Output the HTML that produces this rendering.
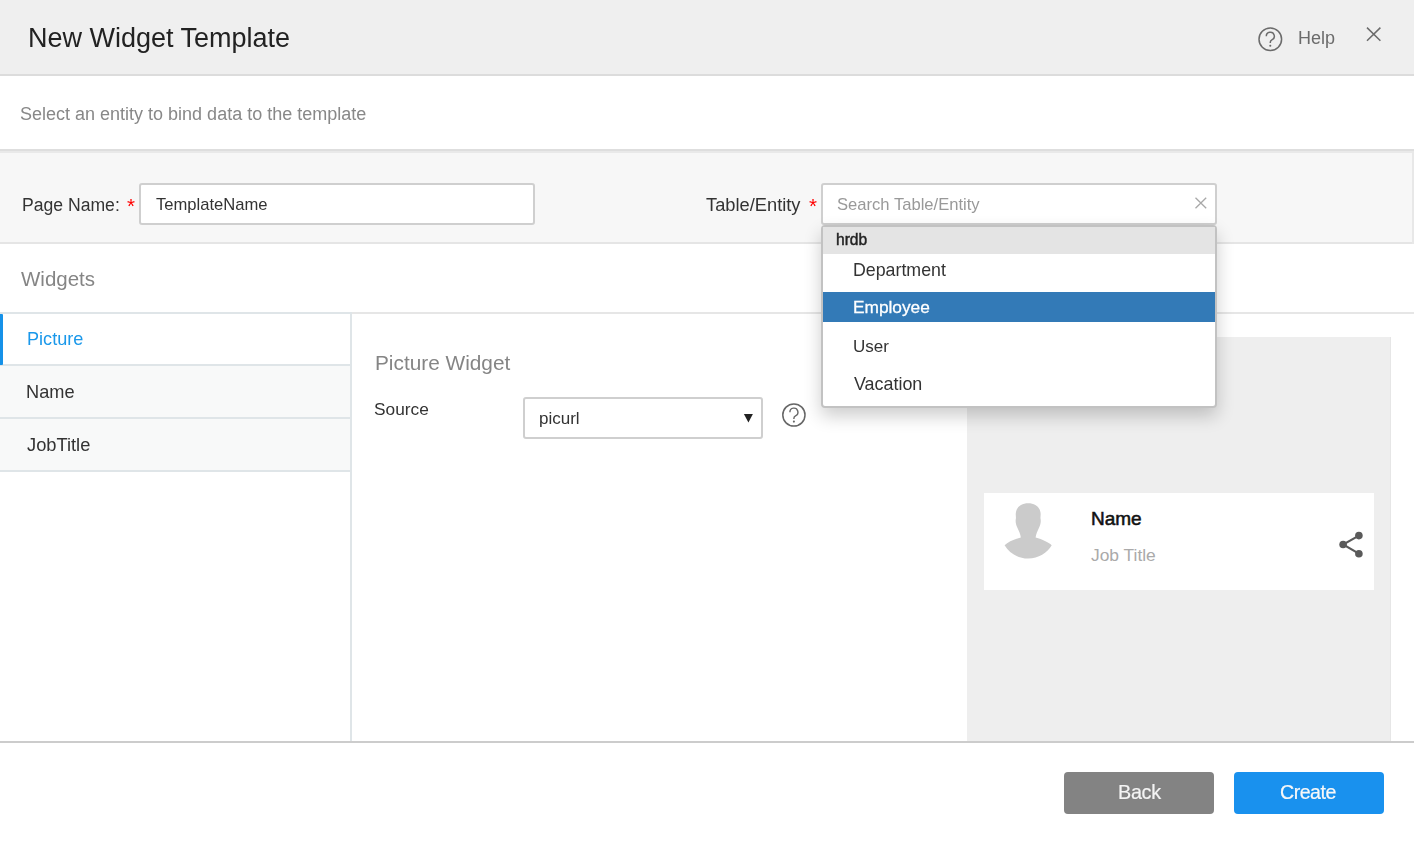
<!DOCTYPE html>
<html><head><meta charset="utf-8">
<style>
*{box-sizing:border-box;margin:0;padding:0}
html,body{width:1414px;height:844px;overflow:hidden;background:#fff;font-family:"Liberation Sans",sans-serif;color:#333}
.a{position:absolute}
.t{position:absolute;white-space:nowrap;display:inline-block;will-change:transform}
.inp{position:absolute;background:#fff;border:2px solid #cfcfcf;border-radius:3px}
.btn{position:absolute;top:772px;width:150px;height:42px;border-radius:4px}
</style></head><body>
<!-- header -->
<div class="a" style="left:0;top:0;width:1414px;height:74px;background:#efefef"></div>
<div class="a" style="left:0;top:74px;width:1414px;height:2px;background:#dcdcdc"></div>
<svg class="a" style="left:1256px;top:25px" width="28" height="28" viewBox="0 0 28 28"><circle cx="14.3" cy="14.2" r="11.3" fill="none" stroke="#6b6b6b" stroke-width="1.5"/><path d="M10.3 11.3a4 4 0 1 1 5.6 3.6c-1 .5-1.6 1.2-1.6 2.4v.8" fill="none" stroke="#6b6b6b" stroke-width="1.5"/><circle cx="14.3" cy="20.8" r="1.05" fill="#6b6b6b"/></svg>
<svg class="a" style="left:1364px;top:25px" width="20" height="20" viewBox="0 0 20 20"><path d="M3 2.6L16.4 15.8M16.4 2.6L3 15.8" stroke="#6b6b6b" stroke-width="1.5"/></svg>

<!-- form -->
<div class="a" style="left:0;top:149px;width:1414px;height:2px;background:#dedede"></div>
<div class="a" style="left:0;top:151px;width:1414px;height:2px;background:#e9e9e9"></div>
<div class="a" style="left:0;top:153px;width:1414px;height:89px;background:#f7f7f7"></div>
<div class="a" style="left:0;top:242px;width:1414px;height:2px;background:#e5e5e5"></div>
<div class="a" style="left:1412px;top:151px;width:2px;height:93px;background:#e8e8e8"></div>
<div class="inp" style="left:139px;top:183px;width:396px;height:42px"></div>
<div class="inp" style="left:821px;top:183px;width:396px;height:42px"></div>
<svg class="a" style="left:1192px;top:195px" width="17" height="17" viewBox="0 0 17 17"><path d="M3.5 2.7L14.2 13.2M14.2 2.7L3.5 13.2" stroke="#a8a8a8" stroke-width="1.3"/></svg>

<!-- widgets list -->
<div class="a" style="left:0;top:312px;width:352px;height:2px;background:#dfe5e8"></div>
<div class="a" style="left:352px;top:312px;width:1062px;height:2px;background:#e6e6e6"></div>
<div class="a" style="left:0;top:364px;width:350px;height:2px;background:#dfe5e8"></div>
<div class="a" style="left:0;top:366px;width:350px;height:51px;background:#f8f9f9"></div>
<div class="a" style="left:0;top:417px;width:350px;height:2px;background:#dfe5e8"></div>
<div class="a" style="left:0;top:419px;width:350px;height:51px;background:#f8f9f9"></div>
<div class="a" style="left:0;top:470px;width:350px;height:2px;background:#dfe5e8"></div>
<div class="a" style="left:0;top:314px;width:3px;height:51px;background:#1591e8;border-radius:0 1px 1px 0"></div>
<div class="a" style="left:350px;top:314px;width:2px;height:427px;background:#dfe5e8"></div>

<!-- center -->
<div class="inp" style="left:523px;top:397px;width:240px;height:42px"></div>
<svg class="a" style="left:743px;top:413px" width="10" height="10" viewBox="0 0 10 10"><path d="M0.9 1H9.9L5.4 9.5Z" fill="#222"/></svg>
<svg class="a" style="left:780px;top:401px" width="28" height="28" viewBox="0 0 28 28"><circle cx="13.9" cy="14" r="11.1" fill="none" stroke="#666" stroke-width="1.5"/><path d="M9.9 11.2a4 4 0 1 1 5.6 3.6c-1 .5-1.6 1.2-1.6 2.4v.9" fill="none" stroke="#666" stroke-width="1.4"/><circle cx="13.9" cy="20.6" r="1.05" fill="#666"/></svg>

<!-- preview -->
<div class="a" style="left:967px;top:337px;width:424px;height:404px;background:#eeeeee;border-right:1px solid #e6e6e6"></div>
<div class="a" style="left:984px;top:493px;width:390px;height:97px;background:#fff"></div>
<svg class="a" style="left:1000px;top:500px" width="56" height="62" viewBox="0 0 56 62"><path d="M28.2 3.3C22 3.3 17 6.5 16 12C15.3 15 16.3 17 15.8 19C15.3 22 16 25 17.5 28C18.8 31 20.5 34 20.8 37.5C14 39.5 8 42 4.6 45.3C9 53 18 58.6 28.2 58.6C38.4 58.6 47.4 53 51.7 45.3C48.4 42 42.4 39.5 35.6 37.5C36 34 37.6 31 38.9 28C40.4 25 41.1 22 40.6 19C40.1 17 41.1 15 40.4 12C39.4 6.5 34.4 3.3 28.2 3.3Z" fill="#cbcbcb"/></svg>
<svg class="a" style="left:1332px;top:527px" width="34" height="34" viewBox="0 0 34 34"><path d="M26.9 8.6L11.1 17.5L26.9 26.7" fill="none" stroke="#5a5a5a" stroke-width="2.1"/><circle cx="26.9" cy="8.6" r="3.8" fill="#5a5a5a"/><circle cx="11.1" cy="17.5" r="3.8" fill="#5a5a5a"/><circle cx="26.9" cy="26.7" r="3.8" fill="#5a5a5a"/></svg>

<!-- footer -->
<div class="a" style="left:0;top:741px;width:1414px;height:2px;background:#cccccc"></div>
<div class="btn" style="left:1064px;background:#838383"></div>
<div class="btn" style="left:1234px;background:#1991ee"></div>

<div class="t" id="title" style="left:28.00px;top:25.04px;font-size:27px;line-height:27px;color:#222;font-weight:400;">New Widget Template</div>
<div class="t" id="help" style="left:1298.00px;top:28.96px;font-size:18px;line-height:18px;color:#6b6b6b;font-weight:400;">Help</div>
<div class="t" id="sub" style="left:20.00px;top:104.96px;font-size:18px;line-height:18px;color:#888;font-weight:400;">Select an entity to bind data to the template</div>
<div class="t" id="pname" style="left:22.00px;top:197.00px;font-size:17.6px;line-height:17.6px;color:#333;font-weight:400;">Page Name:</div>
<div class="t" id="ast1" style="left:126.70px;top:195.55px;font-size:20.5px;line-height:20.5px;color:#ff0000;font-weight:400;">*</div>
<div class="t" id="tname" style="left:156.00px;top:197.05px;font-size:16.6px;line-height:16.6px;color:#333;font-weight:400;">TemplateName</div>
<div class="t" id="tent" style="left:706.00px;top:196.01px;font-size:18.3px;line-height:18.3px;color:#333;font-weight:400;">Table/Entity</div>
<div class="t" id="ast2" style="left:809.00px;top:196.05px;font-size:20.5px;line-height:20.5px;color:#ff0000;font-weight:400;">*</div>
<div class="t" id="search" style="left:837.30px;top:197.05px;font-size:16.6px;line-height:16.6px;color:#999;font-weight:400;">Search Table/Entity</div>
<div class="t" id="widgets" style="left:21.00px;top:269.05px;font-size:20.5px;line-height:20.5px;color:#858585;font-weight:400;">Widgets</div>
<div class="t" id="picture" style="left:26.50px;top:329.98px;font-size:18.1px;line-height:18.1px;color:#1a98ea;font-weight:400;">Picture</div>
<div class="t" id="name" style="left:26.00px;top:382.99px;font-size:18.2px;line-height:18.2px;color:#333;font-weight:400;">Name</div>
<div class="t" id="jobtitle" style="left:27.00px;top:436.01px;font-size:18.3px;line-height:18.3px;color:#333;font-weight:400;">JobTitle</div>
<div class="t" id="picwidget" style="left:374.50px;top:352.99px;font-size:20.8px;line-height:20.8px;color:#858585;font-weight:400;">Picture Widget</div>
<div class="t" id="source" style="left:374.20px;top:400.96px;font-size:17.3px;line-height:17.3px;color:#333;font-weight:400;">Source</div>
<div class="t" id="picurl" style="left:539.00px;top:410.01px;font-size:17px;line-height:17px;color:#333;font-weight:400;">picurl</div>
<div class="t" id="cname" style="left:1091.00px;top:509.02px;font-size:19px;line-height:19px;color:#111;font-weight:400;-webkit-text-stroke:0.55px #111;will-change:auto">Name</div>
<div class="t" id="jobt" style="left:1091.00px;top:546.97px;font-size:17.4px;line-height:17.4px;color:#aaa;font-weight:400;will-change:auto">Job Title</div>
<div class="t" id="back" style="left:1118.00px;top:783.04px;font-size:19.8px;line-height:19.8px;color:#f4f4f4;font-weight:400;letter-spacing:-0.3px;-webkit-text-stroke:0.2px #f4f4f4">Back</div>
<div class="t" id="create" style="left:1280.00px;top:783.01px;font-size:19.6px;line-height:19.6px;color:#f8f8f8;font-weight:400;letter-spacing:-0.5px;-webkit-text-stroke:0.2px #f8f8f8">Create</div>


<!-- dropdown -->
<div class="a" style="left:821px;top:225px;width:396px;height:183px;background:#fff;border:2px solid #c2c2c2;border-radius:4px;box-shadow:0 8px 18px rgba(0,0,0,.2)"></div>
<div class="a" style="left:823px;top:227px;width:392px;height:27px;background:#e4e4e4"></div>
<div class="a" style="left:823px;top:292px;width:392px;height:30px;background:#337ab7"></div>
<div class="t" id="hrdb" style="left:836.00px;top:231.99px;font-size:15.6px;line-height:15.6px;color:#222;font-weight:400;-webkit-text-stroke:0.45px #222">hrdb</div>
<div class="t" id="dept" style="left:852.70px;top:262.03px;font-size:17.8px;line-height:17.8px;color:#333;font-weight:400;">Department</div>
<div class="t" id="emp" style="left:852.50px;top:299.46px;font-size:17.3px;line-height:17.3px;color:#fff;font-weight:400;-webkit-text-stroke:0.3px #fff">Employee</div>
<div class="t" id="user" style="left:852.50px;top:338.01px;font-size:17px;line-height:17px;color:#333;font-weight:400;">User</div>
<div class="t" id="vac" style="left:853.50px;top:376.05px;font-size:17.9px;line-height:17.9px;color:#333;font-weight:400;">Vacation</div>

</body></html>
